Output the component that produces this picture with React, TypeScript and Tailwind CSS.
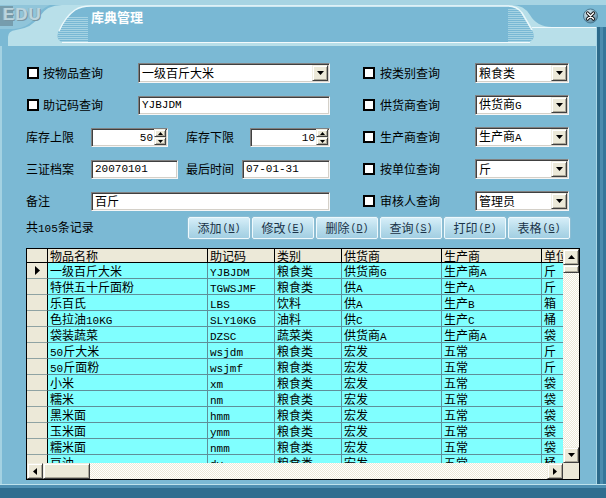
import React from 'react'

type Dir = 'up' | 'down' | 'left' | 'right'

const ITEMS: string[][] = [
  ['一级百斤大米', 'YJBJDM', '粮食类', '供货商G', '生产商A', '斤'],
  ['特供五十斤面粉', 'TGWSJMF', '粮食类', '供A', '生产A', '斤'],
  ['乐百氏', 'LBS', '饮料', '供A', '生产B', '箱'],
  ['色拉油10KG', 'SLY10KG', '油料', '供C', '生产C', '桶'],
  ['袋装蔬菜', 'DZSC', '蔬菜类', '供货商A', '生产商A', '袋'],
  ['50斤大米', 'wsjdm', '粮食类', '宏发', '五常', '斤'],
  ['50斤面粉', 'wsjmf', '粮食类', '宏发', '五常', '斤'],
  ['小米', 'xm', '粮食类', '宏发', '五常', '袋'],
  ['糯米', 'nm', '粮食类', '宏发', '五常', '袋'],
  ['黑米面', 'hmm', '粮食类', '宏发', '五常', '袋'],
  ['玉米面', 'ymm', '粮食类', '宏发', '五常', '袋'],
  ['糯米面', 'nmm', '粮食类', '宏发', '五常', '袋'],
  ['豆油', 'dy', '粮食类', '宏发', '五常', '桶'],
]

const COLS = [
  { title: '物品名称', w: 'w-[160px]' },
  { title: '助记码', w: 'w-[67px]' },
  { title: '类别', w: 'w-[67px]' },
  { title: '供货商', w: 'w-[100px]' },
  { title: '生产商', w: 'w-[100px]' },
  { title: '单位', w: 'w-[21px]' },
]

const sunk =
  'bg-white border border-t-[#808080] border-l-[#808080] border-r-[#f6f6f6] border-b-[#f6f6f6] shadow-[inset_1px_1px_0_#404040,inset_-1px_-1px_0_#d4d0c8]'
const raised =
  'bg-[#ece9d8] border border-t-[#f1efe2] border-l-[#f1efe2] border-r-[#404040] border-b-[#404040] shadow-[inset_1px_1px_0_#ffffff,inset_-1px_-1px_0_#aca899]'
const dither =
  '[background-image:repeating-conic-gradient(#ece9d8_0%_25%,#ffffff_0%_50%)] [background-size:2px_2px]'

// ascii runs get the narrow half-width face, the rest stays in the CJK face
function T({ s }: { s: string }) {
  return (
    <>
      {s.split(/([\x20-\x7e]+)/).map((p, i) =>
        i % 2 ? (
          <span key={i} className="[font-family:'Liberation_Mono',monospace] text-[11px]">
            {p}
          </span>
        ) : (
          p
        ),
      )}
    </>
  )
}

function Tri({ dir, w = 7, h = 4 }: { dir: Dir; w?: number; h?: number }) {
  const flat = dir === 'up' || dir === 'down'
  const pts =
    dir === 'up'
      ? `0,${h} ${w / 2},0 ${w},${h}`
      : dir === 'down'
        ? `0,0 ${w},0 ${w / 2},${h}`
        : dir === 'left'
          ? `${h},0 ${h},${w} 0,${w / 2}`
          : `0,0 0,${w} ${h},${w / 2}`
  return (
    <svg width={flat ? w : h} height={flat ? h : w} className="block">
      <polygon points={pts} fill="#000" />
    </svg>
  )
}

function Check() {
  return <div className="w-[12px] h-[12px] shrink-0 border-2 border-black bg-white" />
}

function Field({ w, value }: { w: string; value: string }) {
  return (
    <div className={`${sunk} ${w} h-[19px] shrink-0 flex items-center pl-[3px] leading-[14px] whitespace-nowrap`}>
      <T s={value} />
    </div>
  )
}

function Select({ w, value }: { w: string; value: string }) {
  return (
    <div className={`${sunk} ${w} h-[20px] shrink-0 flex items-center pl-[3px] pr-[1px]`}>
      <span className="flex-1 leading-[14px] whitespace-nowrap">
        <T s={value} />
      </span>
      <div className={`${raised} w-[16px] h-[16px] flex items-center justify-center`}>
        <Tri dir="down" />
      </div>
    </div>
  )
}

function Spin({ w, value }: { w: string; value: string }) {
  return (
    <div className={`${sunk} ${w} h-[19px] shrink-0 flex items-center pl-[2px] pr-[1px]`}>
      <span className="flex-1 text-right pr-[1px] leading-[14px]">
        <T s={value} />
      </span>
      <div className="flex flex-col w-[12px]">
        <div className={`${raised} h-[8px] flex items-center justify-center`}>
          <Tri dir="up" w={5} h={3} />
        </div>
        <div className={`${raised} h-[8px] flex items-center justify-center`}>
          <Tri dir="down" w={5} h={3} />
        </div>
      </div>
    </div>
  )
}

function Query({ label, value }: { label: string; value: string }) {
  return (
    <div className="flex items-center">
      <Check />
      <span className="ml-[5px] w-[95px] shrink-0">{label}</span>
      <Select w="w-[94px]" value={value} />
    </div>
  )
}

function Btn({ label, k }: { label: string; k: string }) {
  return (
    <div className="w-[62px] h-[22px] shrink-0 flex items-center justify-center rounded-[2px] border border-[#eef9fd] shadow-[0_0_0_1px_#8cbdd3] [background-image:linear-gradient(to_bottom,#d6eef8,#b9ddec_50%,#a2cee2)] text-[#1a3348]">
      {label}
      <span className="[font-family:'Liberation_Mono',monospace] text-[10px] ml-[1px]">
        (<span className="underline">{k}</span>)
      </span>
    </div>
  )
}

const TAB =
  'M62 42 Q55 39 59 30 Q65 17 75 10 Q81 6 91 6 H508 Q517 6 522 13 Q528 23 532 30 Q537 40 528 42 Z'

function TitleBar() {
  const left = Array.from({ length: 13 }, (_, i) => 17 + i * 2)
  const right = Array.from({ length: 17 }, (_, i) => 9 + i * 2)
  return (
    <div className="relative h-[46px] shrink-0">
      <svg width="606" height="46" className="absolute inset-0">
        <defs>
          <clipPath id="tabClip">
            <path d={TAB} />
          </clipPath>
          <radialGradient id="closeFill" cx="0.35" cy="0.3" r="0.8">
            <stop offset="0" stopColor="#e4f0f5" />
            <stop offset="0.5" stopColor="#98bccd" />
            <stop offset="1" stopColor="#4d7d96" />
          </radialGradient>
        </defs>
        <rect width="606" height="46" fill="#7bb9d4" />
        <rect width="606" height="5" fill="#a7d4e3" />
        <path d="M0 5 H50 Q40 9 34 19 Q27 28 14 29 H0 Z" fill="#90c5da" />
        <rect x="0" y="6" width="13" height="20" fill="#6b8c9a" opacity="0.7" />
        <path
          d="M8 46 V37 Q8 31 16 30 Q32 28 40 16 Q47 5 62 5 H512 Q524 5 530 15 Q537 27 552 27 H597 V46 Z"
          fill="#b8dfe9"
        />
        <path d={TAB} fill="#79b8d4" />
        <g clipPath="url(#tabClip)" stroke="#a6d3e3" strokeWidth="1">
          {left.map((y) => (
            <line key={'l' + y} x1="50" y1={y + 0.5} x2="88" y2={y + 0.5} />
          ))}
          {right.map((y) => (
            <line key={'r' + y} x1="508" y1={y + 0.5} x2="545" y2={y + 0.5} />
          ))}
        </g>
        <path
          d="M59 31 Q65 17 75 10 Q81 6 91 6 H508 Q517 6 522 13 Q528 23 532 30"
          stroke="#eaf8fb"
          strokeWidth="1.5"
          fill="none"
        />
        <line x1="62" y1="42.5" x2="530" y2="42.5" stroke="#f4fbfd" />
        <line x1="532" y1="27.5" x2="596" y2="27.5" stroke="#eef9fc" />
        <rect x="596" y="27" width="1" height="19" fill="#a8d6e6" />
        <rect x="597" y="27" width="3" height="19" fill="#2c6a8b" />
        <rect x="600" y="27" width="3" height="19" fill="#4b8cae" />
        <rect x="603" y="27" width="3" height="19" fill="#35769a" />
        {/* close button */}
        <circle cx="590.5" cy="16" r="7" fill="url(#closeFill)" stroke="#4a7a93" />
        <g strokeLinecap="round">
          <path d="M587.5 13 L593.5 19 M593.5 13 L587.5 19" stroke="#111" strokeWidth="3.2" />
          <path d="M587.5 13 L593.5 19 M593.5 13 L587.5 19" stroke="#fff" strokeWidth="1.5" />
        </g>
      </svg>
      <span className="absolute left-[3px] top-[5px] text-[17px] font-bold tracking-[1px] leading-[20px] text-[#bcd5de] [font-family:'Liberation_Sans',sans-serif] [text-shadow:1px_1px_0_#7896a3,-1px_0_0_#9ab7c3]">
        EDU
      </span>
      <span className="absolute left-[91px] top-[9px] text-[13px] font-bold leading-[16px] text-white">
        库典管理
      </span>
    </div>
  )
}

function Grid() {
  return (
    <div className="ml-[26px] w-[554px] h-[232px] shrink-0 border border-black bg-[#ece9d8] flex flex-col">
      <div className="flex h-[214px]">
        <div className="w-[536px] overflow-hidden">
          <div className="flex h-[14px]">
            <div className="w-[21px] shrink-0 border-r border-b border-black bg-[#ece9d8]" />
            {COLS.map((c, i) => (
              <div
                key={c.title}
                className={`${c.w} shrink-0 border-b border-black bg-[#ece9d8] pl-[2px] leading-[13px] whitespace-nowrap ${i < COLS.length - 1 ? 'border-r' : ''}`}
              >
                {c.title}
              </div>
            ))}
          </div>
          {ITEMS.map((row, r) => (
            <div key={r} className="flex h-[16px]">
              <div className="w-[21px] shrink-0 border-r border-r-black border-b border-b-[#8fa3a3] bg-[#ece9d8] flex items-center pl-[8px]">
                {r === 0 && <Tri dir="right" w={9} h={5} />}
              </div>
              {row.map((cell, i) => (
                <div
                  key={i}
                  className={`${COLS[i].w} shrink-0 border-b border-[#5f8f9a] bg-[#80ffff] pl-[2px] leading-[15px] whitespace-nowrap ${i < row.length - 1 ? 'border-r' : ''}`}
                >
                  <T s={cell} />
                </div>
              ))}
            </div>
          ))}
        </div>
        <div className="w-[16px] flex flex-col">
          <div className={`${raised} h-[16px] flex items-center justify-center`}>
            <Tri dir="up" />
          </div>
          <div className={`${raised} h-[8px]`} />
          <div className={`flex-1 ${dither}`} />
          <div className={`${raised} h-[16px] flex items-center justify-center`}>
            <Tri dir="down" />
          </div>
        </div>
      </div>
      <div className="flex h-[16px]">
        <div className={`${raised} w-[16px] flex items-center justify-center`}>
          <Tri dir="left" />
        </div>
        <div className={`${raised} w-[47px]`} />
        <div className={`flex-1 ${dither}`} />
        <div className={`${raised} w-[16px] flex items-center justify-center`}>
          <Tri dir="right" />
        </div>
        <div className="w-[16px] bg-[#ece9d8]" />
      </div>
    </div>
  )
}

export default function App() {
  return (
    <div className="w-[606px] h-[498px] overflow-hidden flex flex-col bg-[#7bb9d4] text-[12px] text-black [font-family:'Noto_Sans_CJK_SC','Liberation_Sans',sans-serif]">
      <TitleBar />
      <div className="flex flex-1">
        <div className="flex-1 flex flex-col pt-[11px] shadow-[inset_2px_0_0_#a4d2e2]">
          <div className="flex items-center h-[32px]">
            <div className="w-[363px] shrink-0 flex items-center pl-[27px]">
              <Check />
              <span className="ml-[4px] w-[95px] shrink-0">按物品查询</span>
              <Select w="w-[192px]" value="一级百斤大米" />
            </div>
            <Query label="按类别查询" value="粮食类" />
          </div>
          <div className="flex items-center h-[32px]">
            <div className="w-[363px] shrink-0 flex items-center pl-[27px]">
              <Check />
              <span className="ml-[4px] w-[95px] shrink-0">助记码查询</span>
              <Field w="w-[192px]" value="YJBJDM" />
            </div>
            <Query label="供货商查询" value="供货商G" />
          </div>
          <div className="flex items-center h-[32px]">
            <div className="w-[363px] shrink-0 flex items-center pl-[26px]">
              <span className="w-[65px] shrink-0">库存上限</span>
              <Spin w="w-[77px]" value="50" />
              <span className="ml-[18px] w-[64px] shrink-0">库存下限</span>
              <Spin w="w-[80px]" value="10" />
            </div>
            <Query label="生产商查询" value="生产商A" />
          </div>
          <div className="flex items-center h-[32px]">
            <div className="w-[363px] shrink-0 flex items-center pl-[26px]">
              <span className="w-[65px] shrink-0">三证档案</span>
              <Field w="w-[87px]" value="20070101" />
              <span className="ml-[8px] w-[56px] shrink-0">最后时间</span>
              <Field w="w-[88px]" value="07-01-31" />
            </div>
            <Query label="按单位查询" value="斤" />
          </div>
          <div className="flex items-center h-[32px]">
            <div className="w-[363px] shrink-0 flex items-center pl-[26px]">
              <span className="w-[65px] shrink-0">备注</span>
              <Field w="w-[239px]" value="百斤" />
            </div>
            <Query label="审核人查询" value="管理员" />
          </div>
          <div className="flex items-center h-[22px] pl-[26px]">
            <span className="w-[162px] shrink-0">
              <T s="共105条记录" />
            </span>
            <div className="flex gap-[2px]">
              <Btn label="添加" k="N" />
              <Btn label="修改" k="E" />
              <Btn label="删除" k="D" />
              <Btn label="查询" k="S" />
              <Btn label="打印" k="P" />
              <Btn label="表格" k="G" />
            </div>
          </div>
          <div className="mt-[9px]">
            <Grid />
          </div>
        </div>
        <div className="w-[10px] shrink-0 [background-image:linear-gradient(to_right,#a8d6e6_0_1px,#2c6a8b_1px_4px,#4b8cae_4px_7px,#35769a_7px)]" />
      </div>
      <div className="h-[14px] shrink-0 [background-image:linear-gradient(to_bottom,#bde2ec_0_1px,#4f90b2_1px_4px,#2f6d8f_4px)]" />
    </div>
  )
}
